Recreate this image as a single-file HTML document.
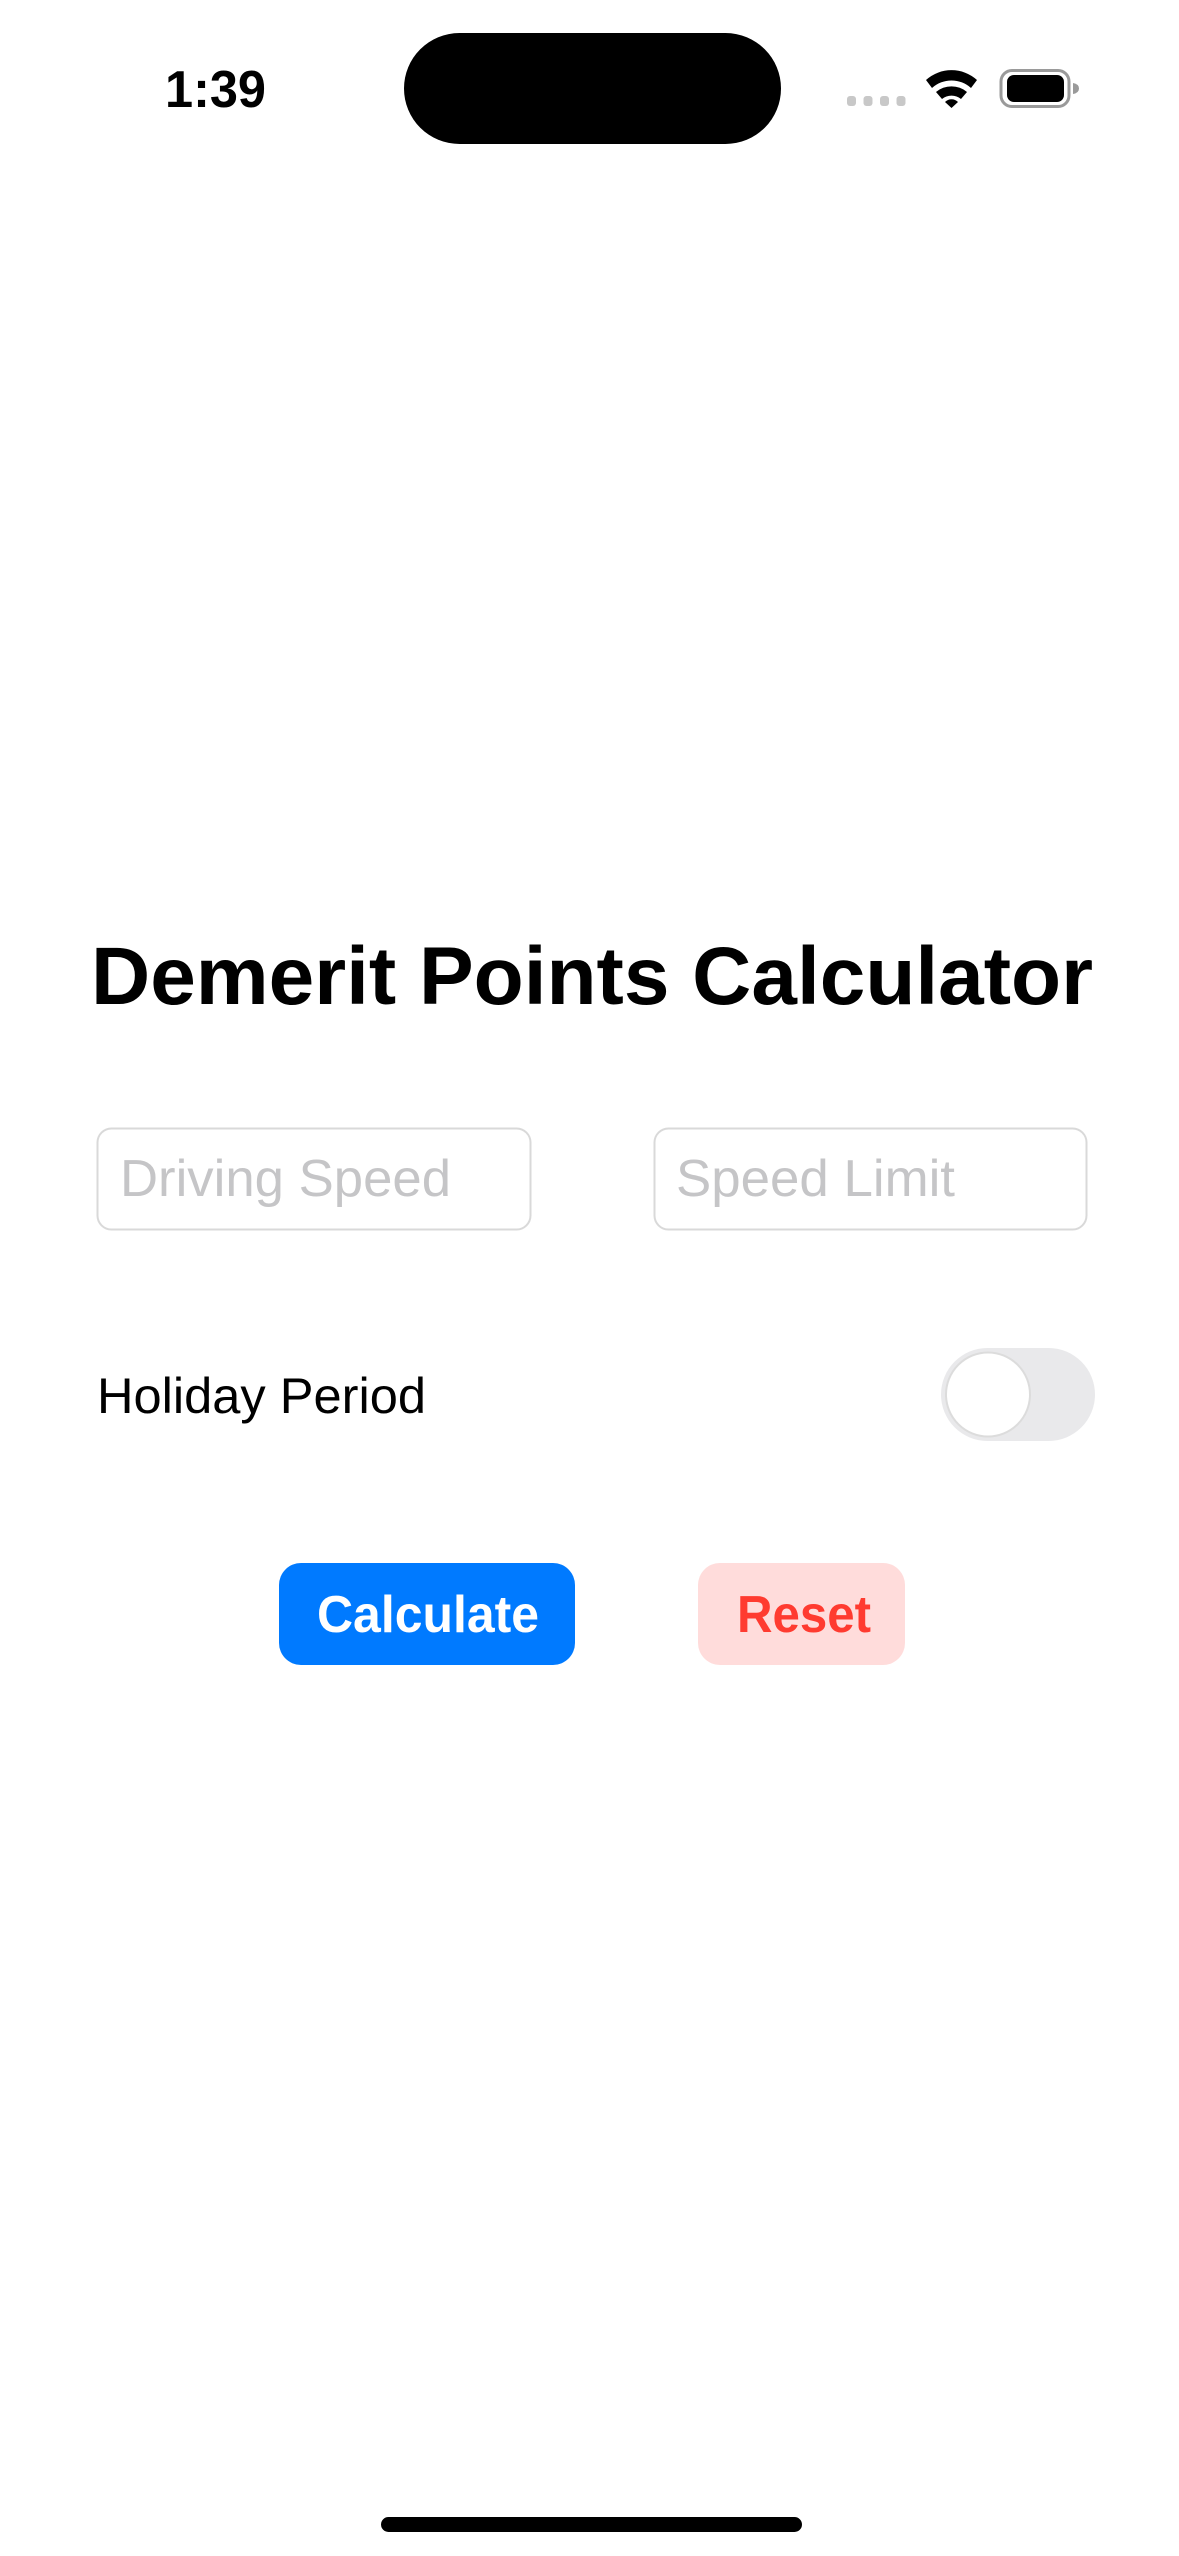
<!DOCTYPE html>
<html><head><meta charset="utf-8"><style>
html,body{margin:0;padding:0;background:#fff;}
body{width:1179px;height:2556px;position:relative;overflow:hidden;font-family:"Liberation Sans",sans-serif;}
.abs{position:absolute;}
</style></head><body>
<svg class="abs" style="left:0;top:0" width="1179" height="2556" viewBox="0 0 1179 2556">
  <!-- status bar -->
  <text x="165" y="107" font-family="Liberation Sans" font-weight="bold" font-size="52" textLength="101" lengthAdjust="spacingAndGlyphs" fill="#000">1:39</text>
  <rect x="404" y="33" width="377" height="111" rx="55.5" fill="#000"/>
  <g fill="#c8c8c8">
    <rect x="847" y="96" width="9" height="10" rx="3"/>
    <rect x="863.5" y="96" width="9" height="10" rx="3"/>
    <rect x="880" y="96" width="9" height="10" rx="3"/>
    <rect x="896.5" y="96" width="9" height="10" rx="3"/>
  </g>
  <g fill="#000">
    <path d="M926 80 A38 38 0 0 1 977 80 L971 88 A29 29 0 0 0 932 88 Z"/>
    <path d="M936 92 A24 24 0 0 1 967 92 L961 99 A15 15 0 0 0 942 99 Z"/>
    <path d="M945 102 A9 9 0 0 1 958 102 L951.5 108 Z"/>
  </g>
  <rect x="1001" y="70.5" width="68" height="36" rx="11" fill="none" stroke="#9a9a9a" stroke-width="3"/>
  <rect x="1007" y="75" width="57" height="27" rx="7" fill="#000"/>
  <path d="M1073 83 Q1079 84 1079 88.5 Q1079 93 1073 94 Z" fill="#9a9a9a"/>

  <!-- title -->
  <text x="91" y="1004" font-family="Liberation Sans" font-weight="bold" font-size="82" textLength="1002" lengthAdjust="spacingAndGlyphs" fill="#000">Demerit Points Calculator</text>

  <!-- fields -->
  <rect x="97.5" y="1128.5" width="433" height="101" rx="14" fill="#fff" stroke="#d9d9d9" stroke-width="2"/>
  <rect x="654.5" y="1128.5" width="432" height="101" rx="14" fill="#fff" stroke="#d9d9d9" stroke-width="2"/>
  <text x="120" y="1196" font-family="Liberation Sans" font-size="52" textLength="331" lengthAdjust="spacingAndGlyphs" fill="#c5c5c7">Driving Speed</text>
  <text x="676" y="1196" font-family="Liberation Sans" font-size="52" textLength="279" lengthAdjust="spacingAndGlyphs" fill="#c5c5c7">Speed Limit</text>

  <!-- holiday -->
  <text x="97" y="1413" font-family="Liberation Sans" font-size="50" textLength="329" lengthAdjust="spacingAndGlyphs" fill="#000">Holiday Period</text>
  <rect x="941" y="1348" width="154" height="93" rx="46.5" fill="#e9e9eb"/>
  <circle cx="988" cy="1394.5" r="42" fill="#fff" stroke="#dcdcdc" stroke-width="2"/>

  <!-- buttons -->
  <rect x="279" y="1563" width="296" height="102" rx="22" fill="#007aff"/>
  <text x="317" y="1632" font-family="Liberation Sans" font-weight="bold" font-size="52" textLength="222" lengthAdjust="spacingAndGlyphs" fill="#fff">Calculate</text>
  <rect x="698" y="1563" width="207" height="102" rx="22" fill="#ffdcdb"/>
  <text x="737" y="1632" font-family="Liberation Sans" font-weight="bold" font-size="52" textLength="134" lengthAdjust="spacingAndGlyphs" fill="#ff3b30">Reset</text>

  <!-- home indicator -->
  <rect x="381" y="2517" width="421" height="15" rx="7.5" fill="#000"/>
</svg>
</body></html>
